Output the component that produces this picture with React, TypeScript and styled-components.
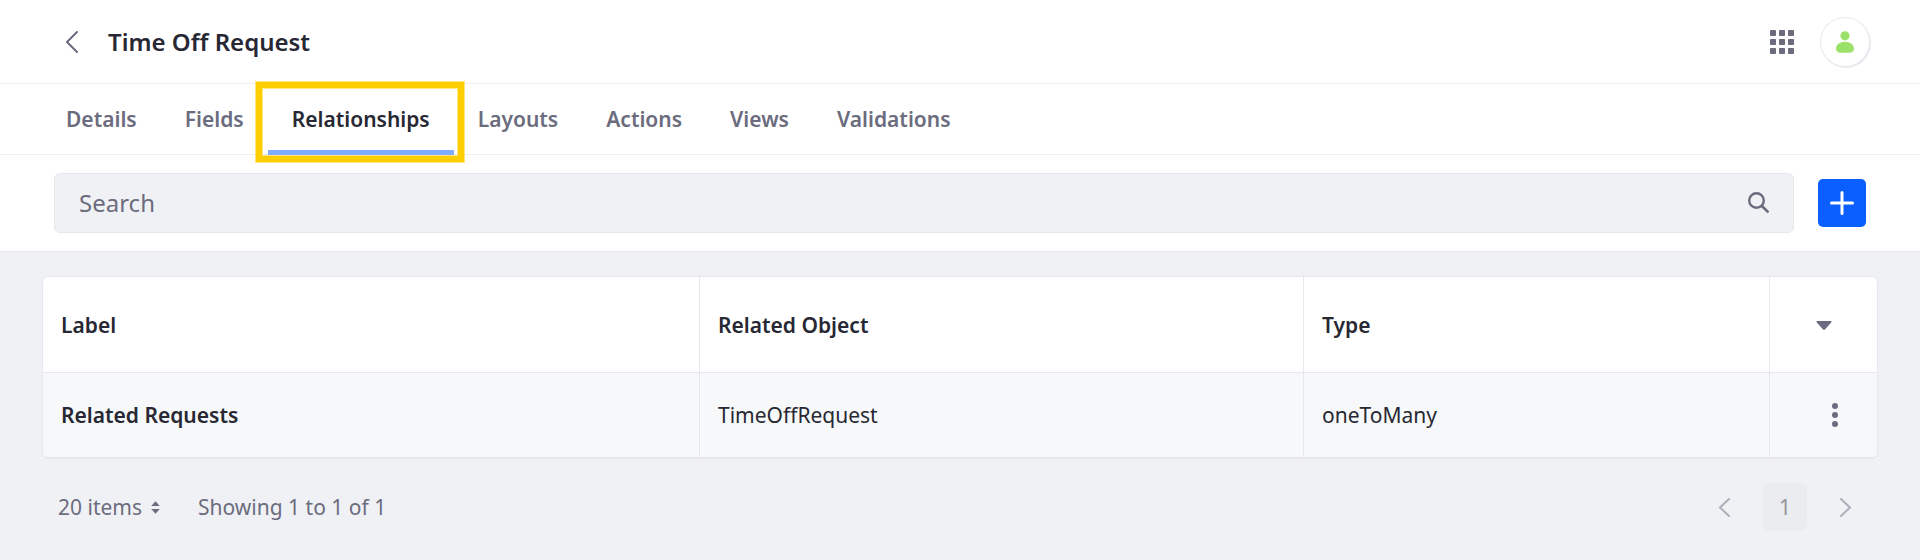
import React from "react";
import styled, { createGlobalStyle } from "styled-components";

const GlobalStyle = createGlobalStyle`
  * { box-sizing: border-box; }
  body {
    margin: 0;
    background: #f0f1f5;
    color: #272833;
    font-family: "Noto Sans", sans-serif;
    font-size: 21px;
    line-height: 31px;
  }
  svg { display: block; flex: none; }
`;

const Page = styled.div`
  display: flex;
  flex-direction: column;
  height: 560px;
  overflow: hidden;
`;

const Header = styled.header`
  display: flex;
  align-items: center;
  height: 84px;
  padding: 1px 50px 0 66px;
  background: #fff;
  border-bottom: 1px solid #f0f0f4;
`;

const Title = styled.h1`
  flex: 1;
  margin: 0 0 0 30px;
  font-size: 24px;
  line-height: 36px;
  font-weight: 600;
`;

const Avatar = styled.div`
  display: flex;
  align-items: center;
  justify-content: center;
  width: 50px;
  height: 50px;
  margin-left: 26px;
  border-radius: 50%;
  background: #fff;
  box-shadow: inset 0 0 0 1px #e7e7ed, 1px 1px 0 0 #e7e7ed;
`;

const TabBar = styled.nav`
  display: flex;
  height: 71px;
  padding-left: 42px;
  background: #fff;
  border-bottom: 1px solid #f0f0f4;
`;

const Tab = styled.a<{ $active?: boolean }>`
  position: relative;
  display: flex;
  align-items: center;
  height: 71px;
  padding: 0 24px;
  font-weight: 600;
  color: ${(p) => (p.$active ? "#272833" : "#6b6c7e")};
  box-shadow: ${(p) => (p.$active ? "inset 0 -5px 0 #80acff" : "none")};
`;

const Highlight = styled.span`
  position: absolute;
  inset: -2px -10px -7px -12px;
  border: 6px solid #ffce00;
  box-shadow: 0 0 0 1px rgba(255, 206, 0, 0.5), inset 0 0 0 1px rgba(255, 206, 0, 0.5);
`;

const Toolbar = styled.div`
  display: flex;
  align-items: center;
  height: 97px;
  padding: 0 54px;
  gap: 24px;
  background: #fff;
  border-bottom: 1px solid #e7e7ed;
`;

const SearchBox = styled.div`
  display: flex;
  align-items: center;
  justify-content: space-between;
  flex: 1;
  height: 60px;
  padding: 0 24px 1px;
  border: 1px solid #e7e7ed;
  border-radius: 6px;
  background: #f0f1f5;
  color: #6b6c7e;
  font-size: 24px;
`;

const AddButton = styled.button`
  display: flex;
  align-items: center;
  justify-content: center;
  width: 48px;
  height: 48px;
  padding: 0;
  border: 0;
  border-radius: 5px;
  background: #0b5fff;
`;

const Table = styled.section`
  margin: 24px 42px 0;
  border: 1px solid #e7e7ed;
  border-bottom-width: 2px;
  border-radius: 6px;
  overflow: hidden;
`;

const Row = styled.div<{ $head?: boolean }>`
  display: grid;
  grid-template-columns: 657px 604px 466px 1fr;
  height: ${(p) => (p.$head ? 96 : 84)}px;
  background: ${(p) => (p.$head ? "#fff" : "#f7f8f9")};
  border-bottom: ${(p) => (p.$head ? "1px solid #e7e7ed" : "0")};
`;

const Cell = styled.div<{ $head?: boolean; $bold?: boolean }>`
  display: flex;
  align-items: center;
  padding: ${(p) => (p.$head ? "1px 18px 0" : "0 18px")};
  font-weight: ${(p) => (p.$head || p.$bold ? 600 : 400)};
  border-right: 1px solid #e7e7ed;
`;

const ActionCell = styled.div<{ $head?: boolean }>`
  display: flex;
  align-items: center;
  padding: ${(p) => (p.$head ? "1px 0 0 46px" : "0 0 0 62px")};
`;

const Footer = styled.footer`
  display: flex;
  align-items: center;
  height: 48px;
  margin-top: 24px;
  padding: 0 69px 0 58px;
  color: #6b6c7e;
`;

const PageSize = styled.span`
  display: flex;
  align-items: center;
  gap: 9px;
  margin-right: 38px;
`;

const Pager = styled.div`
  display: flex;
  align-items: center;
  gap: 33px;
  margin-left: auto;
`;

const PageNumber = styled.span`
  display: flex;
  align-items: center;
  justify-content: center;
  width: 44px;
  height: 48px;
  border-radius: 6px;
  background: #ebecef;
  color: #939498;
`;

type ChevronProps = { w: number; h: number; color: string; flip?: boolean };

const Chevron = ({ w, h, color, flip }: ChevronProps) => (
  <svg width={w} height={h} viewBox={`0 0 ${w} ${h}`} fill="none" stroke={color} strokeWidth={2} strokeLinecap="round" strokeLinejoin="round">
    <path d={flip ? `M1 1 L${w - 1} ${h / 2} L1 ${h - 1}` : `M${w - 1} 1 L1 ${h / 2} L${w - 1} ${h - 1}`} />
  </svg>
);

const GridIcon = () => (
  <svg width="24" height="24" fill="#6b6c7e">
    {[0, 9, 18].map((y) => [0, 9, 18].map((x) => <rect key={`${x}-${y}`} x={x} y={y} width="6" height="6" rx="0.8" />))}
  </svg>
);

const UserIcon = () => (
  <svg width="18" height="22" fill="#9be169">
    <circle cx="9" cy="4.8" r="4.6" />
    <path d="M9 10.800c5.200 0 9 3.300 9 6.800 0 3-2.400 4.200-5 4.200H5c-2.600 0-5-1.200-5-4.200 0-3.500 3.800-6.800 9-6.800z" />
  </svg>
);

const tabs = ["Details", "Fields", "Relationships", "Layouts", "Actions", "Views", "Validations"];

export default function App() {
  return (
    <Page>
      <GlobalStyle />
      <Header>
        <Chevron w={12} h={22} color="#6b6c7e" />
        <Title>Time Off Request</Title>
        <GridIcon />
        <Avatar><UserIcon /></Avatar>
      </Header>
      <TabBar>
        {tabs.map((tab) => (
          <Tab key={tab} $active={tab === "Relationships"}>
            {tab}
            {tab === "Relationships" && <Highlight />}
          </Tab>
        ))}
      </TabBar>
      <Toolbar>
        <SearchBox>
          Search
          <svg width="21" height="21" fill="none" stroke="#6b6c7e" strokeLinecap="round">
            <circle cx="8.500" cy="8.500" r="7.300" strokeWidth="2.400" />
            <path d="M14.200 14.200 L19.600 19.600" strokeWidth="2.700" />
          </svg>
        </SearchBox>
        <AddButton aria-label="Add">
          <svg width="24" height="24" stroke="#fff" strokeWidth="3" strokeLinecap="round">
            <path d="M12 1.500V22.500M1.500 12H22.500" />
          </svg>
        </AddButton>
      </Toolbar>
      <Table>
        <Row $head>
          <Cell $head>Label</Cell>
          <Cell $head>Related Object</Cell>
          <Cell $head>Type</Cell>
          <ActionCell $head>
            <svg width="16" height="9" fill="#6b6c7e"><path d="M1.300 0H14.700Q16 .3 15.200 1.500L9 8.400Q8 9.300 7 8.400L.8 1.500Q0 .3 1.300 0z" /></svg>
          </ActionCell>
        </Row>
        <Row>
          <Cell $bold>Related Requests</Cell>
          <Cell>TimeOffRequest</Cell>
          <Cell>oneToMany</Cell>
          <ActionCell>
            <svg width="6" height="24" fill="#6b6c7e"><circle cx="3" cy="3" r="3" /><circle cx="3" cy="12" r="3" /><circle cx="3" cy="21" r="3" /></svg>
          </ActionCell>
        </Row>
      </Table>
      <Footer>
        <PageSize>
          20 items
          <svg width="9" height="13" fill="#6b6c7e"><path d="M4.500 .3L8.800 5H.2zM4.500 12.700L8.800 8H.2z" /></svg>
        </PageSize>
        <span>Showing 1 to 1 of 1</span>
        <Pager>
          <Chevron w={11} h={19} color="#adaebb" />
          <PageNumber>1</PageNumber>
          <Chevron w={11} h={19} color="#adaebb" flip />
        </Pager>
      </Footer>
    </Page>
  );
}
